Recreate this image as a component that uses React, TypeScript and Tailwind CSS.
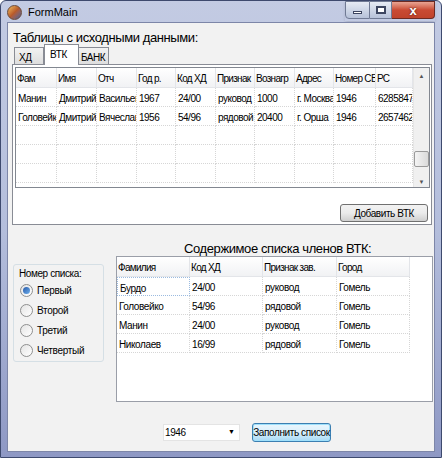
import React from "react";

const font = { fontFamily: '"Liberation Sans", Arial, sans-serif' };

const vtkCols = [
	{ label: "Фам", w: 41 },
	{ label: "Имя", w: 40 },
	{ label: "Отч", w: 40 },
	{ label: "Год р.", w: 39 },
	{ label: "Код ХД", w: 40 },
	{ label: "Признак", w: 39 },
	{ label: "Вознагр", w: 40 },
	{ label: "Адрес", w: 39 },
	{ label: "Номер СБ", w: 42 },
	{ label: "РС", w: 37 },
];

const vtkRows = [
	["Манин", "Дмитрий", "Васильевич", "1967", "24/00", "руковод", "1000", "г. Москва", "1946", "6285847"],
	["Головейко", "Дмитрий", "Вячеславович", "1956", "54/96", "рядовой", "20400", "г. Орша", "1946", "2657462"],
	["", "", "", "", "", "", "", "", "", ""],
	["", "", "", "", "", "", "", "", "", ""],
	["", "", "", "", "", "", "", "", "", ""],
];

const listCols = [
	{ label: "Фамилия", w: 73 },
	{ label: "Код ХД", w: 73 },
	{ label: "Признак зав.", w: 74 },
	{ label: "Город", w: 73 },
];

const listRows = [
	["Бурдо", "24/00", "руковод", "Гомель"],
	["Головейко", "54/96", "рядовой", "Гомель"],
	["Манин", "24/00", "руковод", "Гомель"],
	["Николаев", "16/99", "рядовой", "Гомель"],
];

function HeaderCell({ label, w }: { label: string; w: number }) {
	return (
		<div
			className="h-[20px] shrink-0 overflow-hidden whitespace-nowrap pl-[1px] pt-[3px] bg-gradient-to-b from-white to-[#f1f2f4] border-r border-b border-[#e3e5e9] text-[10px] tracking-[-0.7px] text-black"
			style={{ width: w }}
		>
			{label}
		</div>
	);
}

function Radio({ label, checked }: { label: string; checked?: boolean }) {
	return (
		<div className="flex items-center gap-[4px] h-[22px]">
			<div className="w-[13px] h-[13px] rounded-full border border-[#8e8f8f] bg-gradient-to-br from-[#e4e4e4] to-white flex items-center justify-center">
				{checked && <div className="w-[7px] h-[7px] rounded-full bg-gradient-to-br from-[#2a5aa8] to-[#6eb0ee]" />}
			</div>
			<span className="text-[10px] tracking-[-0.3px] text-black">{label}</span>
		</div>
	);
}

function TitleButtons() {
	return (
		<div className="flex items-start h-[20px] mr-[6px] shadow-sm">
			<div className="w-[25px] h-[18px] rounded-bl-[4px] border border-[#707a94] bg-gradient-to-b from-[#e6ebf4] to-[#b7c2d9] flex items-end justify-center pb-[4px]">
				<div className="w-[9px] h-[3px] bg-white border border-[#3c4560]" />
			</div>
			<div className="w-[22px] h-[18px] border-y border-r border-[#707a94] bg-gradient-to-b from-[#e6ebf4] to-[#b7c2d9] flex items-center justify-center">
				<div className="w-[10px] h-[8px] border-2 border-[#3c4560] bg-white" />
			</div>
			<div className="w-[43px] h-[18px] rounded-br-[4px] border-y border-r border-[#6d2a22] bg-gradient-to-b from-[#e8a493] via-[#c94a33] to-[#c0432b] flex items-center justify-center">
				<span className="text-white text-[13px] font-bold leading-none" style={{ textShadow: "0 0 2px #3a0a00" }}>
					x
				</span>
			</div>
		</div>
	);
}

export default function App() {
	return (
		<div className="w-[442px] h-[458px] overflow-hidden bg-white" style={font}>
			<div className="w-[442px] h-[458px] rounded-t-[6px] border border-[#3e4a6e] bg-gradient-to-b from-[#c3cbe3] via-[#b4bedc] to-[#8e98c4] flex flex-col">
				{/* Title bar */}
				<div className="h-[21px] flex items-start justify-between">
					<div className="flex items-center gap-[6px] pl-[6px] pt-[3px]">
						<div className="w-[15px] h-[15px] rounded-full bg-gradient-to-br from-[#f0c060] via-[#b85a2a] to-[#3a5a9a] border border-[#6a4a3a]" />
						<span className="text-[11px] text-black">FormMain</span>
					</div>
					<TitleButtons />
				</div>

				{/* Client area */}
				<div className="ml-[6px] w-[428px] h-[430px] border border-[#7d86a8] bg-[#f2f2f2] flex flex-col">
					<div className="pl-[5px] pt-[6px] h-[22px] text-[13px] tracking-[-0.4px] leading-[18px] text-black">
						Таблицы с исходными данными:
					</div>

					{/* Tabs */}
					<div className="ml-[6px] h-[19px] flex items-end">
						<div className="w-[30px] h-[17px] border border-[#898c95] border-b-0 bg-gradient-to-b from-[#f2f2f2] to-[#dedede] text-[10px] tracking-[-0.3px] pl-[4px] pt-[2px]">ХД</div>
						<div className="w-[35px] h-[21px] -mb-[1px] border border-[#898c95] border-b-0 bg-white text-[10px] tracking-[-0.3px] pl-[5px] pt-[2px] relative z-10">ВТК</div>
						<div className="w-[30px] h-[17px] border border-[#898c95] border-b-0 border-l-0 bg-gradient-to-b from-[#f2f2f2] to-[#dedede] text-[10px] tracking-[-0.5px] pl-[2px] pt-[2px]">БАНК</div>
					</div>
					<div className="ml-[4px] w-[420px] h-[161px] border border-[#898c95] bg-white p-[2px] flex flex-col">
						<div className="w-[415px] h-[121px] border border-[#828790] bg-white flex overflow-hidden">
							<div className="flex flex-col">
								<div className="flex">
									{vtkCols.map((c) => (
										<HeaderCell key={c.label} label={c.label} w={c.w} />
									))}
								</div>
								{vtkRows.map((r, i) => (
									<div key={i} className="flex">
										{r.map((v, j) => (
											<div
												key={j}
												className="h-[19px] shrink-0 overflow-hidden whitespace-nowrap pl-[2px] pt-[3px] border-r border-b border-dotted border-[#d6d6d6] text-[10px] tracking-[-0.5px] text-black"
												style={{ width: vtkCols[j].w }}
											>
												{v}
											</div>
										))}
									</div>
								))}
							</div>
							<div className="ml-auto w-[17px] h-full bg-[#f0f0f0] border-l border-[#e6e6e6] flex flex-col items-center">
								<div className="h-[17px] w-full flex items-center justify-center text-[6px] text-[#555]">▲</div>
								<div className="flex-1" />
								<div className="w-[15px] h-[16px] rounded-[2px] border border-[#9a9a9a] bg-gradient-to-r from-[#f4f4f4] to-[#dadada]" />
								<div className="h-[10px]" />
								<div className="h-[10px] w-full flex items-center justify-center text-[6px] text-[#555]">▼</div>
							</div>
						</div>
						<div className="flex justify-end pr-[1px] mt-[16px]">
							<button className="w-[88px] h-[18px] rounded-[3px] border border-[#707070] bg-gradient-to-b from-[#f2f2f2] via-[#ebebeb] to-[#cfcfcf] text-[10px] tracking-[-0.4px] whitespace-nowrap text-black">
								Добавить ВТК
							</button>
						</div>
					</div>

					{/* Lower section */}
					<div className="pl-[176px] pt-[15px] h-[31px] text-[13px] tracking-[-0.4px] leading-[18px] text-black">
						Содержимое списка членов ВТК:
					</div>
					<div className="flex items-start ml-[5px]">
						<div className="mt-[8px] w-[91px] h-[98px] border border-[#d5dfe5] rounded-[3px] px-[6px] pt-[1px] flex flex-col">
							<div className="text-[10px] tracking-[-0.4px] text-black h-[14px] -ml-[1px]">Номер списка:</div>
							<Radio label="Первый" checked />
							<Radio label="Второй" />
							<Radio label="Третий" />
							<Radio label="Четвертый" />
						</div>
						<div className="ml-[12px] w-[317px] h-[146px] border border-[#9a9ea8] bg-white flex flex-col">
							<div className="flex">
								{listCols.map((c) => (
									<HeaderCell key={c.label} label={c.label} w={c.w} />
								))}
							</div>
							{listRows.map((r, i) => (
								<div key={i} className="flex">
									{r.map((v, j) => (
										<div
											key={j}
											className={`h-[19px] shrink-0 overflow-hidden whitespace-nowrap pl-[2px] pt-[3px] text-[10px] tracking-[-0.4px] text-black ${
												i === 0 && j === 0
													? "border border-dotted border-[#9bbbe0]"
													: "border-r border-b border-dotted border-[#d6d6d6]"
											}`}
											style={{ width: listCols[j].w }}
										>
											{v}
										</div>
									))}
								</div>
							))}
						</div>
					</div>

					{/* Bottom controls */}
					<div className="flex items-center mt-[21px] ml-[155px] gap-[12px]">
						<div className="w-[77px] h-[17px] bg-white border border-[#e4e4e4] flex items-center justify-between pl-[1px] pr-[4px]">
							<span className="text-[10px] tracking-[-0.4px] text-black">1946</span>
							<span className="text-[7px] text-black">▼</span>
						</div>
						<button className="w-[79px] h-[19px] rounded-[3px] border border-[#3c7fb1] bg-gradient-to-b from-[#eaf6fd] via-[#d9f0fc] to-[#a7d9f5] text-[10px] tracking-[-0.4px] whitespace-nowrap text-black shadow-[inset_0_0_0_1px_#9fe0fb]">
							Заполнить список
						</button>
					</div>
				</div>
			</div>
		</div>
	);
}
